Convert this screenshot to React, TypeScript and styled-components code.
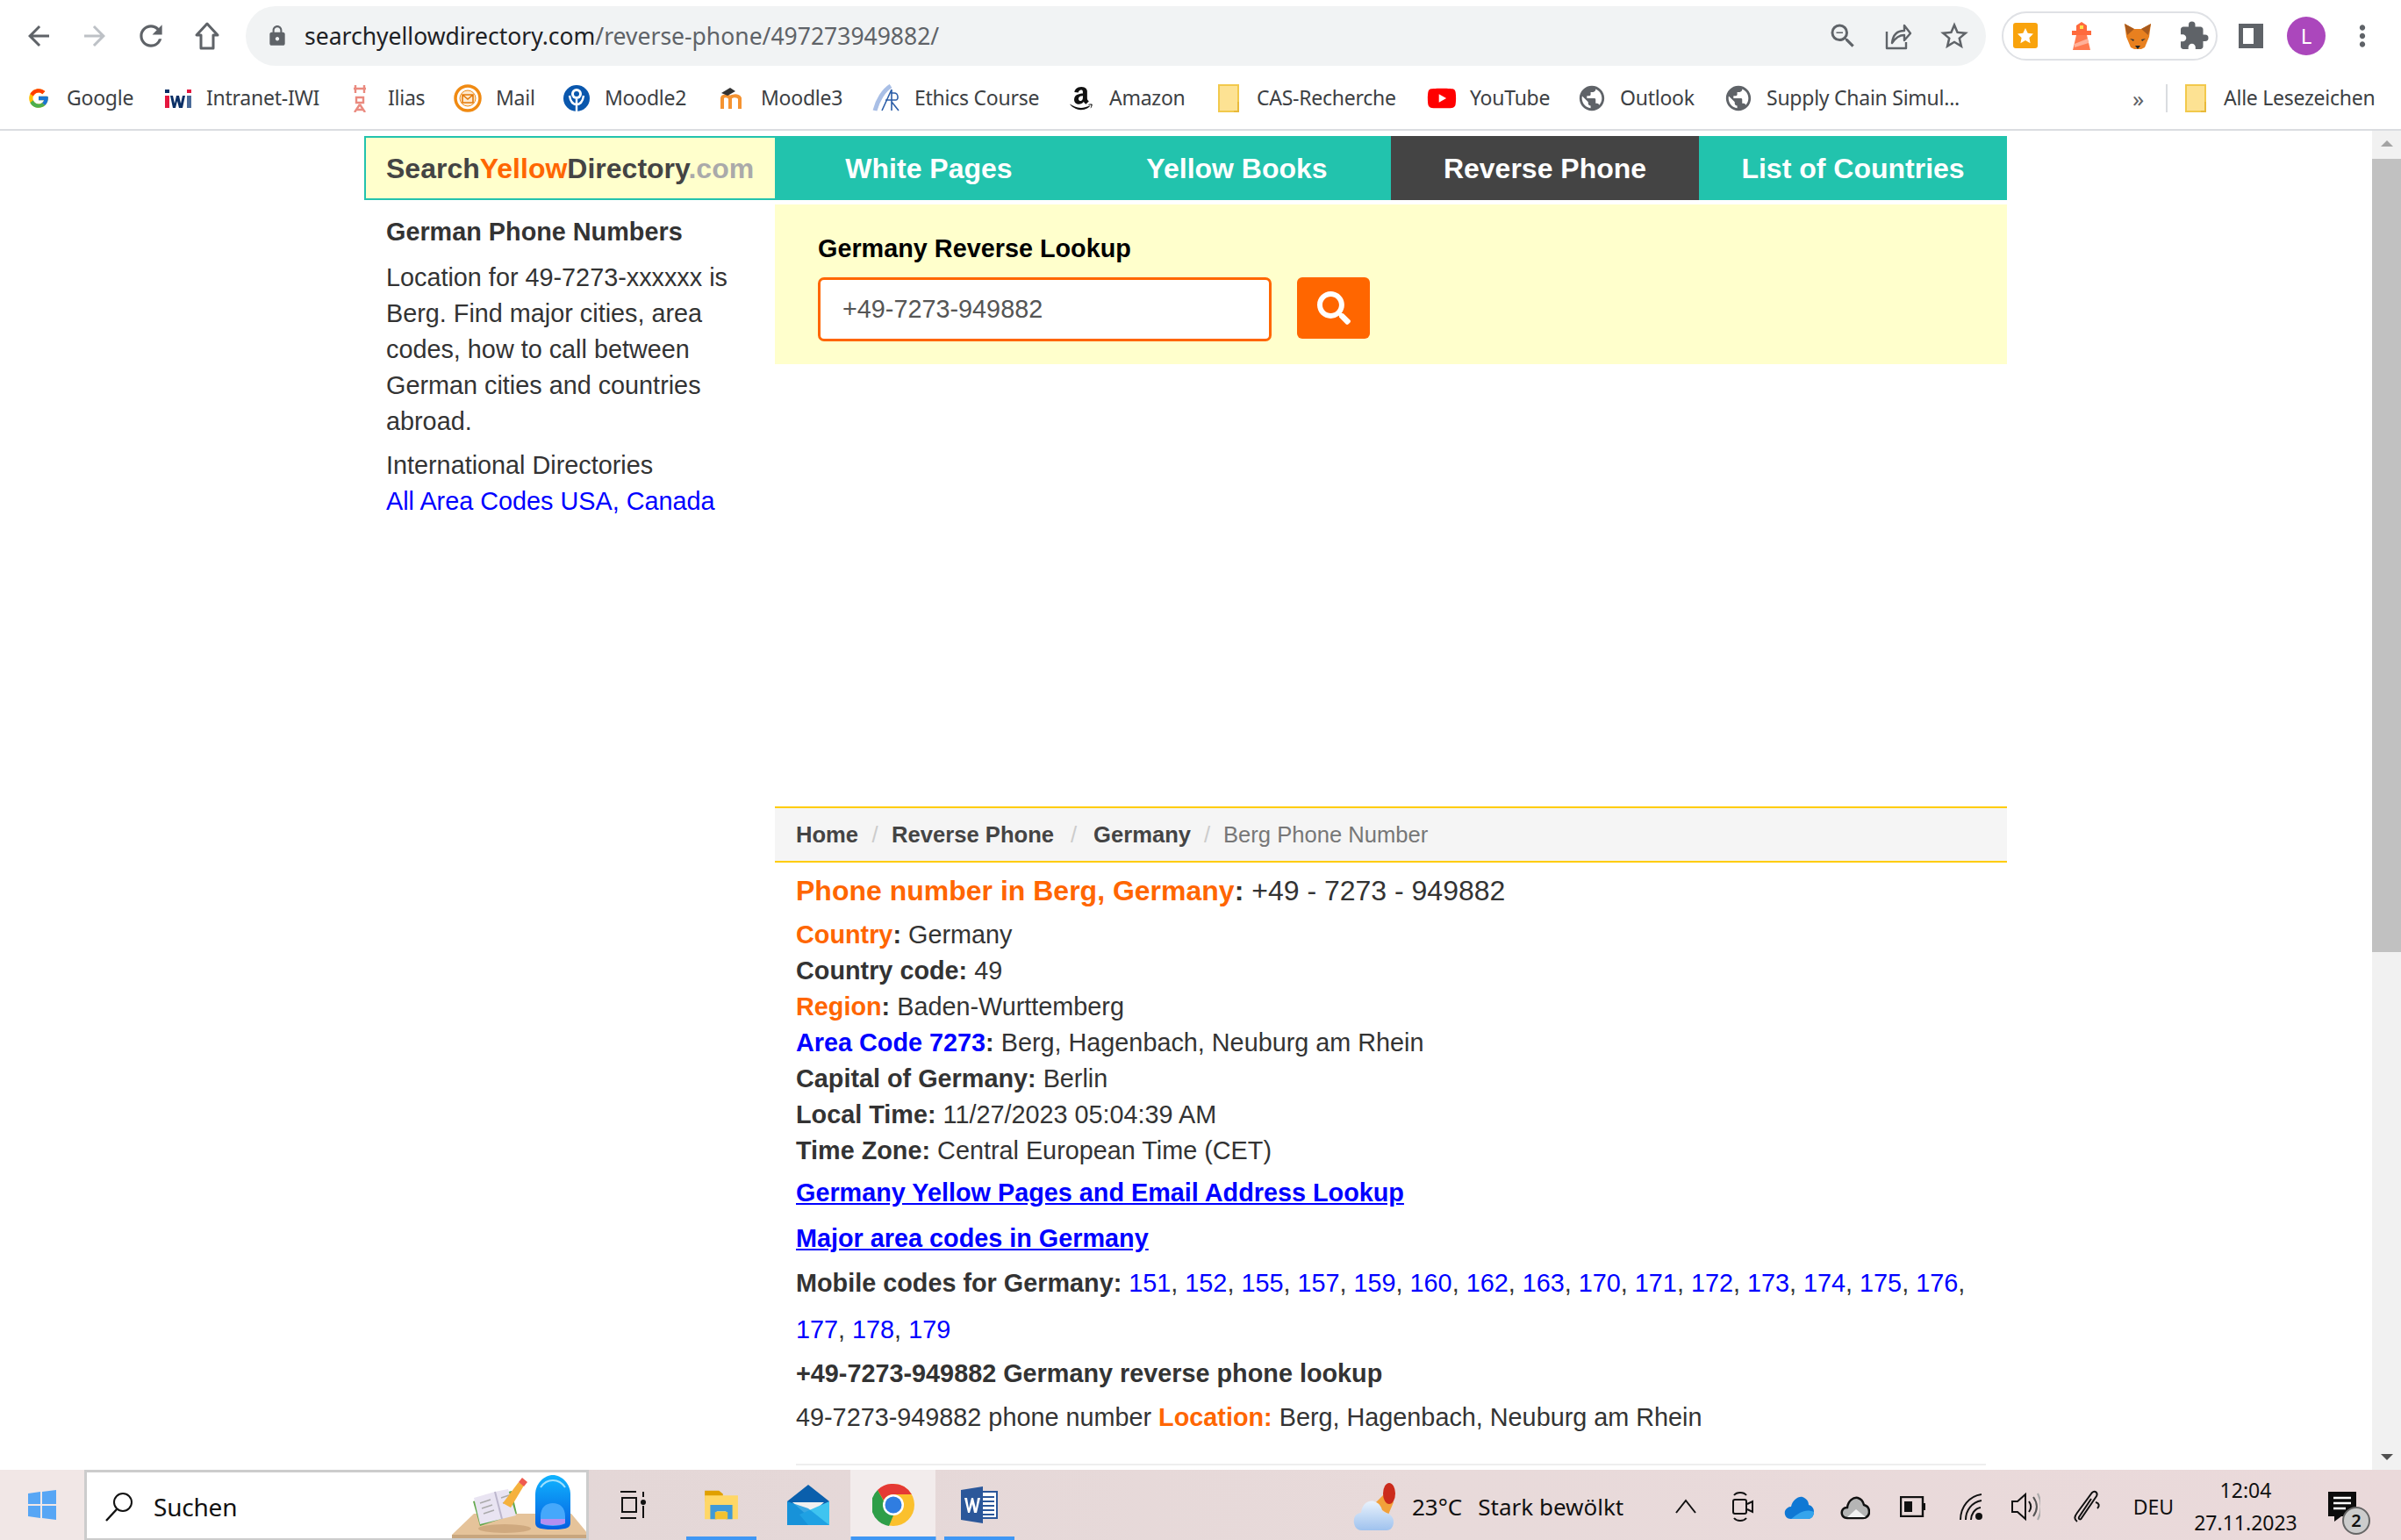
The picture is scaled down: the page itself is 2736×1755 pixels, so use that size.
import { FC, ReactNode } from 'react'
import styled, { createGlobalStyle } from 'styled-components'
import { FaAmazon, FaSearch, FaYoutube } from 'react-icons/fa'
import { FcGoogle } from 'react-icons/fc'
import {
  MdArrowBack,
  MdArrowForward,
  MdExtension,
  MdLock,
  MdMoreVert,
  MdOutlineStarBorder,
  MdPublic,
  MdRefresh,
  MdZoomOut,
} from 'react-icons/md'

const GlobalStyle = createGlobalStyle`
  html, body { margin: 0; padding: 0; background: #fff; }
  * { box-sizing: border-box; }
  a { color: #00f; text-decoration: none; }
`

const UI_FONT = `"Noto Sans", "Open Sans", sans-serif`
const PAGE_FONT = `"Liberation Sans", Arial, sans-serif`
const ORANGE = '#ff6600'
const TEAL = '#22c3ad'

const Screen = styled.div`
  width: 2736px;
  height: 1755px;
  display: flex;
  flex-direction: column;
  overflow: hidden;
  font-family: ${PAGE_FONT};
`

/* browser chrome */
const Toolbar = styled.div`
  height: 82px;
  flex: none;
  display: flex;
  align-items: flex-start;
  padding-top: 7px;
`
const NavIcons = styled.div`
  width: 280px;
  height: 68px;
  padding-left: 12px;
  display: flex;
  align-items: center;
  color: #5f6368;
`
const NavIcon = styled.span<{ $off?: boolean }>`
  width: 64px;
  display: flex;
  justify-content: center;
  color: ${p => (p.$off ? '#bdc1c6' : '#5f6368')};
`
const Omnibox = styled.div`
  width: 1983px;
  height: 68px;
  border-radius: 34px;
  background: #f1f3f4;
  display: flex;
  align-items: center;
  padding-left: 23px;
  color: #5f6368;
`
const Url = styled.div`
  margin-left: 18px;
  flex: 1;
  font: 26.5px/1 ${UI_FONT};
  color: #202124;
  span { color: #5f6368; }
`
const OmniActions = styled.div`
  display: flex;
  gap: 29px;
  padding-right: 17px;
  align-items: center;
`
const ExtensionPill = styled.div`
  margin: 6px 0 0 18px;
  width: 246px;
  height: 56px;
  flex: none;
  border: 2px solid #dfe1e5;
  border-radius: 28px;
  display: flex;
  align-items: center;
  gap: 24px;
  padding-left: 5px;
`
const PillSlot = styled.span`
  width: 40px;
  flex: none;
  display: flex;
  justify-content: center;
  color: #5f6368;
`
const ToolEnd = styled.div`
  display: flex;
  align-items: center;
  height: 56px;
  margin-top: 6px;
  color: #5f6368;
`
const Avatar = styled.div`
  width: 44px;
  height: 44px;
  margin-left: 27px;
  border-radius: 50%;
  background: #ab47bc;
  color: #fff;
  font: 24px/44px ${UI_FONT};
  text-align: center;
`
const PanelGlyph = styled.div`
  width: 28px;
  height: 28px;
  margin-left: 24px;
  border: 5px solid #5f6368;
  border-right-width: 11px;
`
const DotsSlot = styled.span`
  margin-left: 23px;
  display: flex;
`

const Bookmarks = styled.div`
  height: 67px;
  flex: none;
  display: flex;
  align-items: center;
  padding: 0 0 6px 27px;
  border-bottom: 2px solid #dadce0;
`
const Bookmark = styled.div<{ $w: number }>`
  width: ${p => p.$w}px;
  flex: none;
  display: flex;
  align-items: center;
  gap: 15px;
  font: 23px/1 ${UI_FONT};
  letter-spacing: -0.25px;
  color: #3c4043;
  white-space: nowrap;
`
const BookmarkIcon = styled.span`
  width: 34px;
  flex: none;
  display: flex;
  justify-content: center;
  svg { flex: none; }
`
const BookmarkDivider = styled.div`
  width: 2px;
  height: 32px;
  background: #dadce0;
  margin-right: 15px;
`
const Chevrons = styled.div`
  width: 38px;
  margin-left: 230px;
  font: 26px/1 ${UI_FONT};
  color: #5f6368;
`

/* page */
const Viewport = styled.div`
  flex: 1;
  display: flex;
  min-height: 0;
`
const Page = styled.div`
  flex: 1;
  padding: 6px 0 0 415px;
  color: #333;
  font-size: 28.8px;
  line-height: 41px;
`
const TopNav = styled.nav`
  width: 1872px;
  height: 73px;
  display: flex;
`
const Logo = styled.div`
  width: 468px;
  border: 2px solid ${TEAL};
  border-right: 0;
  background: #ffc;
  padding-left: 23px;
  font-size: 32px;
  font-weight: bold;
  line-height: 71px;
  color: #444;
`
const LogoYellow = styled.span`
  color: ${ORANGE};
`
const LogoCom = styled.span`
  color: #aaa;
`
const NavLink = styled.a<{ $active?: boolean }>`
  width: 351px;
  background: ${p => (p.$active ? '#444' : TEAL)};
  color: #fff;
  font-size: 32px;
  font-weight: bold;
  line-height: 75px;
  text-align: center;
`
const Columns = styled.div`
  display: flex;
  width: 1872px;
`
const Sidebar = styled.aside`
  width: 468px;
  padding: 16px 20px 0 25px;
`
const SideTitle = styled.h3`
  margin: 0 0 11px;
  font-size: 28.8px;
  line-height: 41px;
  font-weight: bold;
`
const SideText = styled.p`
  margin: 0 0 9px;
`
const Content = styled.main`
  width: 1404px;
  padding-top: 5px;
`
const LookupPanel = styled.section`
  height: 182px;
  background: #ffc;
  padding: 30px 0 0 49px;
`
const LookupTitle = styled.h2`
  margin: 0 0 12px;
  font-size: 28.8px;
  line-height: 41px;
  font-weight: bold;
  color: #000;
`
const LookupRow = styled.div`
  display: flex;
  align-items: flex-start;
  gap: 29px;
`
const PhoneInput = styled.div`
  width: 517px;
  height: 73px;
  padding-left: 25px;
  border: 3px solid ${ORANGE};
  border-radius: 7px;
  background: #fff;
  color: #555;
  line-height: 67px;
`
const SearchButton = styled.button`
  width: 83px;
  height: 70px;
  border: 0;
  border-radius: 6px;
  background: ${ORANGE};
  color: #fff;
  display: flex;
  align-items: center;
  justify-content: center;
`
const Breadcrumb = styled.div`
  margin-top: 504px;
  height: 64px;
  padding-left: 24px;
  display: flex;
  align-items: center;
  background: #f5f5f5;
  border-top: 2px solid #fc0;
  border-bottom: 2px solid #fc0;
  font-size: 25.6px;
`
const Crumb = styled.b`
  color: #444;
`
const CrumbSep = styled.span<{ $w: number }>`
  width: ${p => p.$w}px;
  color: #ccc;
  font-weight: normal;
  text-align: center;
`
const CrumbLast = styled.span`
  color: #777;
`
const Details = styled.div`
  padding-left: 24px;
`
const PhoneHeading = styled.h1`
  margin: 12px 0 9px;
  font-size: 32px;
  line-height: 41px;
  font-weight: normal;
`
const Hot = styled.b`
  color: ${ORANGE};
`
const InfoRow = styled.div``
const BlueB = styled.a`
  font-weight: bold;
`
const BigLink = styled.a<{ $top: number }>`
  display: block;
  margin-top: ${p => p.$top}px;
  font-weight: bold;
  text-decoration: underline;
`
const CodeList = styled.div`
  margin-top: 4px;
  line-height: 53px;
  width: 1350px;
`
const LookupLine = styled.div`
  font-weight: bold;
  margin-top: 3px;
`
const LocationLine = styled.div`
  margin-top: 9px;
`
const Rule = styled.hr`
  width: 1356px;
  margin: 32px 0 0;
  border: 0;
  border-top: 2px solid #eee;
`

const Scrollbar = styled.div`
  width: 33px;
  flex: none;
  background: #f1f1f1;
  display: flex;
  flex-direction: column;
  justify-content: space-between;
  align-items: center;
  padding: 11px 0;
`
const ScrollThumb = styled.div`
  width: 100%;
  height: 904px;
  margin-bottom: auto;
  margin-top: 14px;
  background: #c1c1c1;
`
const ScrollArrow = styled.div<{ $down?: boolean }>`
  width: 0;
  height: 0;
  border-left: 7px solid transparent;
  border-right: 7px solid transparent;
  ${p => (p.$down ? 'border-top: 7px solid #505050;' : 'border-bottom: 7px solid #a3a3a3;')}
`

/* taskbar */
const Taskbar = styled.footer`
  height: 80px;
  flex: none;
  display: flex;
  background: linear-gradient(90deg, #e1d5d5, #e8dada 60%, #ead9da);
  font-family: ${UI_FONT};
  color: #111;
`
const StartButton = styled.div`
  width: 96px;
  background: #f1e7e6;
  display: flex;
  align-items: center;
  justify-content: center;
`
const SearchBox = styled.div`
  position: relative;
  width: 575px;
  background: #fff;
  border: 3px solid #ccc;
  border-bottom-width: 2px;
  padding: 3px 0 0 20px;
  display: flex;
  align-items: center;
  gap: 22px;
  font-size: 28px;
  letter-spacing: -0.2px;
  overflow: hidden;
`
const SearchArt = styled.svg`
  position: absolute;
  right: -3px;
  bottom: -2px;
`
const TaskApps = styled.div`
  display: flex;
  height: 100%;
`
const TaskApp = styled.div<{ $w: number; $active?: boolean; $open?: boolean; $bar?: number }>`
  position: relative;
  width: ${p => p.$w}px;
  display: flex;
  align-items: center;
  justify-content: center;
  background: ${p => (p.$active ? '#f2ecec' : 'transparent')};
  &::after {
    content: '';
    display: ${p => (p.$open ? 'block' : 'none')};
    position: absolute;
    bottom: 0;
    left: 50%;
    transform: translateX(-50%);
    width: ${p => p.$bar ?? 80}px;
    height: 4px;
    background: #3f97f4;
  }
`
const Tray = styled.div`
  display: flex;
  align-items: center;
  margin-left: 376px;
  padding-top: 3px;
  flex: 1;
  font-size: 23px;
`
const TrayItem = styled.div<{ $w: number; $lead?: number }>`
  width: ${p => p.$w}px;
  margin-left: ${p => p.$lead ?? 0}px;
  flex: none;
  display: flex;
  justify-content: center;
  align-items: center;
  white-space: nowrap;
`
const WeatherText = styled.div`
  width: 316px;
  display: flex;
  gap: 18px;
  padding-left: 17px;
  font-size: 26px;
  white-space: nowrap;
`
const Clock = styled.div`
  width: 138px;
  flex: none;
  display: flex;
  flex-direction: column;
  align-items: center;
  white-space: nowrap;
  font-size: 23px;
  line-height: 37px;
`
const NotifyWrap = styled.div`
  position: relative;
  margin-left: 24px;
  display: flex;
`
const NotifyBadge = styled.span`
  position: absolute;
  right: -15px;
  bottom: -14px;
  width: 32px;
  height: 32px;
  border-radius: 50%;
  background: #ccc;
  border: 2px solid #666;
  font-size: 20px;
  font-weight: 600;
  line-height: 28px;
  text-align: center;
`

/* icons and favicons */
const IconSvg: FC<{ s?: number; w?: number; children: ReactNode }> = ({ s = 24, w, children }) => (
  <svg width={w ?? s} height={s} viewBox={`0 0 ${w ?? s} ${s}`} fill='none'>{children}</svg>
)

const HomeOutline = () => (
  <IconSvg s={34} w={30}>
    <path d='M15 3L3 16h5v15h14V16h5z' stroke='#5f6368' strokeWidth='3' strokeLinejoin='round' />
  </IconSvg>
)
const Share = () => (
  <IconSvg s={32}>
    <path d='M3 11v19h22v-7M9 24c1-9 6-14 14-14V4l7 9-7 8v-6c-6 0-10 3-14 9z' stroke='#5f6368' strokeWidth='2.4' strokeLinejoin='round' />
  </IconSvg>
)
const Iwi = () => (
  <IconSvg s={22} w={32}>
    <rect x='1' y='8' width='5' height='14' fill='#e5173f' />
    <rect x='1' y='1' width='5' height='4' fill='#0a2f66' />
    <path d='M7 8h3l2 9 2-9h3l2 9 2-9h3l-3 14h-4l-2-8-2 8H10z' fill='#0a2f66' />
    <rect x='26' y='8' width='5' height='14' fill='#4a6b99' />
    <rect x='26' y='1' width='5' height='4' fill='#e5173f' />
  </IconSvg>
)
const HkaFlag = () => (
  <IconSvg s={32} w={16}>
    <path d='M3 1v9M13 1v9M1 5h14M4 15h8v6H4zM8 23L2 32M8 23l6 9M4 29h8' stroke='#ea8a7f' strokeWidth='2.4' />
  </IconSvg>
)
const MailRing = () => (
  <IconSvg s={32}>
    <circle cx='16' cy='16' r='14' stroke='#f08a12' strokeWidth='3.5' />
    <circle cx='16' cy='16' r='9' fill='#fde9cf' stroke='#f08a12' strokeWidth='1' />
    <path d='M10 12h12v9H10zM10 12l6 5 6-5' stroke='#e47a08' strokeWidth='1.6' />
  </IconSvg>
)
const Moodle2 = () => (
  <IconSvg s={32}>
    <circle cx='16' cy='16' r='15' fill='#0a57ad' />
    <path d='M16 1l-9 5v10c0 5 3 8 9 8s9-3 9-8V6z' fill='#0a57ad' />
    <circle cx='16' cy='11' r='6' fill='#fff' />
    <circle cx='16' cy='11' r='3' fill='#0a57ad' />
    <path d='M8 13c1 7 4 10 8 10s7-3 8-10M16 17v14' stroke='#fff' strokeWidth='2.4' />
  </IconSvg>
)
const Moodle3 = () => (
  <IconSvg s={28} w={30}>
    <path d='M3 26V14c0-3 7-4 9 0v12M12 26V14c0-3 9-4 11 0v12' stroke='#f59331' strokeWidth='4' />
    <path d='M2 8l10-6 6 4-9 5z' fill='#333' />
  </IconSvg>
)
const EthicsMark = () => (
  <IconSvg s={32}>
    <path d='M3 30C6 18 13 7 21 2' stroke='#a9bfe6' strokeWidth='5' />
    <path d='M11 30L22 6M22 6v24M15 18h12c3 0 3-8-2-8h-4M22 20l8 10' stroke='#2c5ea8' strokeWidth='1.6' />
  </IconSvg>
)
const Folder = () => (
  <IconSvg s={32} w={24}>
    <path d='M1 1h22v30H1z' fill='#fde293' stroke='#f2c94c' strokeWidth='2' />
    <path d='M23 20v11h-5' stroke='#e8b93a' strokeWidth='2' />
  </IconSvg>
)
const AmazonIcon = () => <FaAmazon size={30} color='#111' />
const YouTubeIcon = () => <FaYoutube size={34} color='#f00' />
const GlobeIcon = () => <MdPublic size={34} color='#5f6368' />

const BOOKMARKS: { label: string; w: number; icon: ReactNode }[] = [
  { label: 'Google', w: 159, icon: <FcGoogle size={26} /> },
  { label: 'Intranet-IWI', w: 207, icon: <Iwi /> },
  { label: 'Ilias', w: 123, icon: <HkaFlag /> },
  { label: 'Mail', w: 124, icon: <MailRing /> },
  { label: 'Moodle2', w: 178, icon: <Moodle2 /> },
  { label: 'Moodle3', w: 175, icon: <Moodle3 /> },
  { label: 'Ethics Course', w: 222, icon: <EthicsMark /> },
  { label: 'Amazon', w: 168, icon: <AmazonIcon /> },
  { label: 'CAS-Recherche', w: 243, icon: <Folder /> },
  { label: 'YouTube', w: 171, icon: <YouTubeIcon /> },
  { label: 'Outlook', w: 167, icon: <GlobeIcon /> },
  { label: 'Supply Chain Simul...', w: 236, icon: <GlobeIcon /> },
]

const StarBadge = () => (
  <IconSvg s={32} w={30}>
    <rect x='1' y='1' width='28' height='29' rx='3' fill='#f9a30c' />
    <path d='M15 7l2.700 5.800 6.300.8-4.600 4.300 1.200 6.300-5.600-3.100-5.600 3.100 1.200-6.300L6 13.600l6.300-.8z' fill='#fff' />
  </IconSvg>
)
const Lighthouse = () => (
  <IconSvg s={34} w={24}>
    <path d='M12 1l6 4v7H6V5z' fill='#ff6a3d' />
    <rect x='10' y='5' width='4' height='4' fill='#ffe14d' />
    <rect x='1' y='11' width='22' height='5' fill='#ff6a3d' />
    <path d='M6 16h12l4 17H2z' fill='#ff7a50' />
    <path d='M4 26l15-6 1 5-16 5z' fill='#ffb199' />
  </IconSvg>
)
const Fox = () => (
  <IconSvg s={32}>
    <path d='M1 2l11 6h8l11-6-2 15-5 12-4 2h-8l-4-2-5-12z' fill='#e8801f' />
    <path d='M1 2l11 6-8 7zM31 2L20 8l8 7z' fill='#a85a1d' />
    <path d='M13 27h6l-3 4z' fill='#222' />
    <path d='M7 19l5 1-1 2zM25 19l-5 1 1 2z' fill='#333' />
  </IconSvg>
)

const WinLogo = () => (
  <IconSvg s={36} w={34}>
    <path d='M1 5l14-2v14H1zM17 3l16-2v16H17zM1 19h14v14L1 31zM17 19h16v16l-16-2z' fill='#57a6f5' />
  </IconSvg>
)
const Magnifier = () => (
  <IconSvg s={36} w={34}>
    <circle cx='21' cy='13' r='10' stroke='#111' strokeWidth='2' />
    <path d='M14 21L2 34' stroke='#111' strokeWidth='2.400' />
  </IconSvg>
)
const SearchDecor = () => (
  <SearchArt width='156' height='80' viewBox='0 0 156 80'>
    <defs>
      <linearGradient id='pack' x1='0' y1='0' x2='0' y2='1'>
        <stop offset='0' stopColor='#10b4ff' />
        <stop offset='1' stopColor='#0560e0' />
      </linearGradient>
    </defs>
    <path d='M25 50h111l20 24v6H0v-6z' fill='#e5c39a' />
    <rect x='0' y='74' width='156' height='6' fill='#c8a67e' />
    <ellipse cx='60' cy='67' rx='30' ry='5' fill='#cfa97f' />
    <path d='M24 36l8 28 42-14-6-26z' fill='#62a84c' />
    <path d='M25 32l24-7 15-3 9 30-41 10z' fill='#e9e4f2' />
    <path d='M49 25l8 31' stroke='#bcb6cc' strokeWidth='2' />
    <path d='M32 38l12-4M34 44l12-4M36 50l12-4M56 32l9-3M58 38l9-3' stroke='#aaa' strokeWidth='1.5' />
    <path d='M58 38l18-24 6 4-15 25z' fill='#f5b13d' />
    <path d='M76 14l4-5 6 5-4 5z' fill='#ef5b50' />
    <path d='M95 28c0-12 10-22 20-22s20 10 20 22v32c0 6-4 8-20 8s-20-2-20-8z' fill='url(#pack)' />
    <path d='M101 53c0-10 6-15 14-15s14 5 14 15v8c-6 4-22 4-28 0z' fill='#45a8fb' />
    <path d='M101 56h28v5c-6 3-22 3-28 0z' fill='#b38ff0' />
    <path d='M101 20c4-6 9-8 14-8s10 2 14 8' stroke='#9fe0ff' strokeWidth='2' fill='none' />
  </SearchArt>
)
const TaskView = () => (
  <IconSvg s={32} w={30}>
    <path d='M1 1h18M1 31h18M3 8h16v16H3zM27 1v6M27 17v14' stroke='#111' strokeWidth='2' />
    <circle cx='27' cy='13' r='3' fill='#111' />
  </IconSvg>
)
const Explorer = () => (
  <svg width='42' height='36' viewBox='0 0 44 40' fill='none'>
    <path d='M1 2h18l5 4v10H1z' fill='#e0a000' />
    <path d='M1 8h42v30H1z' fill='#ffd766' />
    <path d='M8 38V20h28v18h-8V28H16v10z' fill='#3f9ad8' />
    <rect x='14' y='29' width='16' height='9' fill='#f2c230' />
  </svg>
)
const MailTile = () => (
  <IconSvg s={46} w={48}>
    <path d='M24 0l24 19v27H0V19z' fill='#0a5fac' />
    <path d='M6 20h36L24 36z' fill='#f0f0f0' />
    <path d='M48 19v27H24L14 34z' fill='#3fc4f0' />
    <path d='M0 19v27h48L24 27z' fill='#1a9be0' opacity='.85' />
  </IconSvg>
)
const ChromeLogo = () => (
  <IconSvg s={48}>
    <circle cx='24' cy='24' r='24' fill='#fbc02d' />
    <path d='M24 0a24 24 0 0 1 20.800 12H24a12 12 0 0 0-11 7L6 7A24 24 0 0 1 24 0z' fill='#e53935' />
    <path d='M6 7l10 18 8 11-5 12A24 24 0 0 1 6 7z' fill='#2e9e48' />
    <circle cx='24' cy='24' r='12' fill='#fff' />
    <circle cx='24' cy='24' r='9.500' fill='#2f7de1' />
  </IconSvg>
)
const WordLogo = () => (
  <IconSvg s={42} w={42}>
    <path d='M22 6h19v30H22z' fill='#fff' stroke='#2b579a' strokeWidth='2' />
    <path d='M24 12h14M24 17h14M24 22h14M24 27h14M24 32h14' stroke='#2b579a' strokeWidth='2' />
    <path d='M0 4L25 0v42L0 38z' fill='#2b579a' />
    <path d='M4 13h3l2 12 3-12h2l3 12 2-12h3l-4 17h-3l-2-10-3 10H8z' fill='#fff' />
  </IconSvg>
)
const Weather = () => (
  <IconSvg s={54} w={50}>
    <defs>
      <linearGradient id='cloudFill' x1='0' y1='0' x2='0' y2='1'>
        <stop offset='0' stopColor='#e9f2fc' />
        <stop offset='1' stopColor='#9fc2ee' />
      </linearGradient>
    </defs>
    <path d='M24 24l14-14 8 12-6 14z' fill='#f2a13a' />
    <ellipse cx='41' cy='12' rx='7' ry='12' fill='#cb2b1c' />
    <path d='M10 54c-8 0-10-8-9-13 1-5 5-7 8-7 1-10 8-15 15-13 6 2 9 7 9 12 7 0 13 5 13 11 0 6-3 10-8 10z' fill='url(#cloudFill)' />
  </IconSvg>
)
const Chevron = () => (
  <IconSvg s={20} w={26}>
    <path d='M2 17L13 3l11 14' stroke='#111' strokeWidth='2' />
  </IconSvg>
)
const Meet = () => (
  <IconSvg s={36} w={26}>
    <path d='M3 5c3-4 11-4 14 0M3 31c3 4 11 4 14 0' stroke='#111' strokeWidth='2' />
    <rect x='2' y='10' width='15' height='16' rx='2' stroke='#111' strokeWidth='2' />
    <path d='M18 15l6-3v12l-6-3' stroke='#111' strokeWidth='2' />
  </IconSvg>
)
const OneDrive = () => (
  <IconSvg s={28} w={34}>
    <path d='M8 28C2 28 0 23 1 19c1-3 4-5 7-5 2-8 8-12 13-11 5 2 7 5 7 9 4 1 6 4 6 8 0 5-3 8-7 8z' fill='#0f78d4' />
    <path d='M8 28h19c4 0 7-3 7-8-9-4-16 0-26 8z' fill='#35a4ec' />
  </IconSvg>
)
const CloudIcon = () => (
  <IconSvg s={30} w={34}>
    <path d='M8 28C3 28 1 24 2 20c1-3 4-4 6-4 1-8 7-12 12-11 4 1 6 4 7 8 4 1 6 4 6 8s-3 7-7 7z' fill='#b5b5b5' stroke='#111' strokeWidth='2.500' />
    <path d='M8 27l10-9 11 9z' fill='#f2f2f2' />
  </IconSvg>
)
const Battery = () => (
  <IconSvg s={24} w={30}>
    <rect x='1' y='1' width='25' height='22' stroke='#111' strokeWidth='2.400' />
    <rect x='5' y='6' width='9' height='12' fill='#111' />
    <rect x='27' y='8' width='2' height='8' fill='#111' />
  </IconSvg>
)
const Wifi = () => (
  <IconSvg s={32} w={28}>
    <path d='M2 31C2 16 12 4 26 2M8 31C8 20 15 11 26 9M14 31c0-6 4-13 11-14' stroke='#111' strokeWidth='2' />
    <circle cx='23' cy='27' r='4' fill='#111' />
  </IconSvg>
)
const Speaker = () => (
  <IconSvg s={34} w={34}>
    <path d='M2 11h6l9-8v28l-9-8H2z' stroke='#111' strokeWidth='2' />
    <path d='M21 11c3 4 3 8 0 12' stroke='#111' strokeWidth='2' />
    <path d='M26 6c5 7 5 15 0 22' stroke='#555' strokeWidth='2' />
    <path d='M31 2c5 10 5 20 0 30' stroke='#aaa' strokeWidth='2' />
  </IconSvg>
)
const PenTray = () => (
  <IconSvg s={38} w={32}>
    <path d='M5 36c-4-3-3-6 0-10L22 3c3-3 7 0 5 4L10 32c-1 2-4 2-3-1L21 10' stroke='#111' strokeWidth='2' />
    <path d='M26 14c4 1 5 4 2 7' stroke='#111' strokeWidth='2' />
  </IconSvg>
)
const NotifyIcon = () => (
  <IconSvg s={36} w={34}>
    <path d='M1 1h32v28H16l-8 6v-6H1z' fill='#0c0c0c' />
    <path d='M7 8h20M7 14h20M7 20h14' stroke='#fff' strokeWidth='2.400' />
  </IconSvg>
)

const MOBILE_CODES = ['151', '152', '155', '157', '159', '160', '162', '163', '170', '171', '172', '173', '174', '175', '176', '177', '178', '179']

const App: FC = () => (
  <Screen>
    <GlobalStyle />
    <Toolbar>
      <NavIcons>
        <NavIcon><MdArrowBack size={36} /></NavIcon>
        <NavIcon $off><MdArrowForward size={36} /></NavIcon>
        <NavIcon><MdRefresh size={38} /></NavIcon>
        <NavIcon><HomeOutline /></NavIcon>
      </NavIcons>
      <Omnibox>
        <MdLock size={26} />
        <Url>searchyellowdirectory.com<span>/reverse-phone/497273949882/</span></Url>
        <OmniActions>
          <MdZoomOut size={36} />
          <Share />
          <MdOutlineStarBorder size={38} />
        </OmniActions>
      </Omnibox>
      <ExtensionPill>
        <PillSlot><StarBadge /></PillSlot>
        <PillSlot><Lighthouse /></PillSlot>
        <PillSlot><Fox /></PillSlot>
        <PillSlot><MdExtension size={36} /></PillSlot>
      </ExtensionPill>
      <ToolEnd>
        <PanelGlyph />
        <Avatar>L</Avatar>
        <DotsSlot><MdMoreVert size={38} /></DotsSlot>
      </ToolEnd>
    </Toolbar>
    <Bookmarks>
      {BOOKMARKS.map(b => (
        <Bookmark key={b.label} $w={b.w}><BookmarkIcon>{b.icon}</BookmarkIcon>{b.label}</Bookmark>
      ))}
      <Chevrons>»</Chevrons>
      <BookmarkDivider />
      <Bookmark $w={230}><BookmarkIcon><Folder /></BookmarkIcon>Alle Lesezeichen</Bookmark>
    </Bookmarks>

    <Viewport>
      <Page>
        <TopNav>
          <Logo>Search<LogoYellow>Yellow</LogoYellow>Directory<LogoCom>.com</LogoCom></Logo>
          <NavLink>White Pages</NavLink>
          <NavLink>Yellow Books</NavLink>
          <NavLink $active>Reverse Phone</NavLink>
          <NavLink>List of Countries</NavLink>
        </TopNav>
        <Columns>
          <Sidebar>
            <SideTitle>German Phone Numbers</SideTitle>
            <SideText>Location for 49-7273-xxxxxx is Berg. Find major cities, area codes, how to call between German cities and countries abroad.</SideText>
            <SideText>International Directories<br /><a>All Area Codes USA, Canada</a></SideText>
          </Sidebar>
          <Content>
            <LookupPanel>
              <LookupTitle>Germany Reverse Lookup</LookupTitle>
              <LookupRow>
                <PhoneInput>+49-7273-949882</PhoneInput>
                <SearchButton><FaSearch size={38} /></SearchButton>
              </LookupRow>
            </LookupPanel>
            <Breadcrumb>
              <Crumb>Home</Crumb>
              <CrumbSep $w={38}>/</CrumbSep>
              <Crumb>Reverse Phone</Crumb>
              <CrumbSep $w={45}>/</CrumbSep>
              <Crumb>Germany</Crumb>
              <CrumbSep $w={37}>/</CrumbSep>
              <CrumbLast>Berg Phone Number</CrumbLast>
            </Breadcrumb>
            <Details>
              <PhoneHeading><Hot>Phone number in Berg, Germany</Hot><b>:</b> +49 - 7273 - 949882</PhoneHeading>
              <InfoRow><Hot>Country</Hot><b>:</b> Germany</InfoRow>
              <InfoRow><b>Country code:</b> 49</InfoRow>
              <InfoRow><Hot>Region</Hot><b>:</b> Baden-Wurttemberg</InfoRow>
              <InfoRow><BlueB>Area Code 7273</BlueB><b>:</b> Berg, Hagenbach, Neuburg am Rhein</InfoRow>
              <InfoRow><b>Capital of Germany:</b> Berlin</InfoRow>
              <InfoRow><b>Local Time:</b> 11/27/2023 05:04:39 AM</InfoRow>
              <InfoRow><b>Time Zone:</b> Central European Time (CET)</InfoRow>
              <BigLink $top={7}>Germany Yellow Pages and Email Address Lookup</BigLink>
              <BigLink $top={11}>Major area codes in Germany</BigLink>
              <CodeList>
                <b>Mobile codes for Germany:</b>{' '}
                {MOBILE_CODES.map((c, i) => (
                  <span key={c}><a>{c}</a>{i < MOBILE_CODES.length - 1 ? ', ' : ''}</span>
                ))}
              </CodeList>
              <LookupLine>+49-7273-949882 Germany reverse phone lookup</LookupLine>
              <LocationLine>49-7273-949882 phone number <Hot>Location:</Hot> Berg, Hagenbach, Neuburg am Rhein</LocationLine>
              <Rule />
            </Details>
          </Content>
        </Columns>
      </Page>
      <Scrollbar>
        <ScrollArrow />
        <ScrollThumb />
        <ScrollArrow $down />
      </Scrollbar>
    </Viewport>

    <Taskbar>
      <StartButton><WinLogo /></StartButton>
      <SearchBox>
        <Magnifier />
        Suchen
        <SearchDecor />
      </SearchBox>
      <TaskApps>
        <TaskApp $w={100}><TaskView /></TaskApp>
        <TaskApp $w={102} $open><Explorer /></TaskApp>
        <TaskApp $w={96}><MailTile /></TaskApp>
        <TaskApp $w={97} $active $open $bar={97}><ChromeLogo /></TaskApp>
        <TaskApp $w={100} $open><WordLogo /></TaskApp>
      </TaskApps>
      <Tray>
        <Weather />
        <WeatherText><span>23°C</span><span>Stark bewölkt</span></WeatherText>
        <TrayItem $w={26}><Chevron /></TrayItem>
        <TrayItem $w={64} $lead={20}><Meet /></TrayItem>
        <TrayItem $w={64}><OneDrive /></TrayItem>
        <TrayItem $w={64}><CloudIcon /></TrayItem>
        <TrayItem $w={68}><Battery /></TrayItem>
        <TrayItem $w={64}><Wifi /></TrayItem>
        <TrayItem $w={60}><Speaker /></TrayItem>
        <TrayItem $w={80}><PenTray /></TrayItem>
        <TrayItem $w={72}>DEU</TrayItem>
        <Clock><span>12:04</span><span>27.11.2023</span></Clock>
        <NotifyWrap>
          <NotifyIcon />
          <NotifyBadge>2</NotifyBadge>
        </NotifyWrap>
      </Tray>
    </Taskbar>
  </Screen>
)

export default App
